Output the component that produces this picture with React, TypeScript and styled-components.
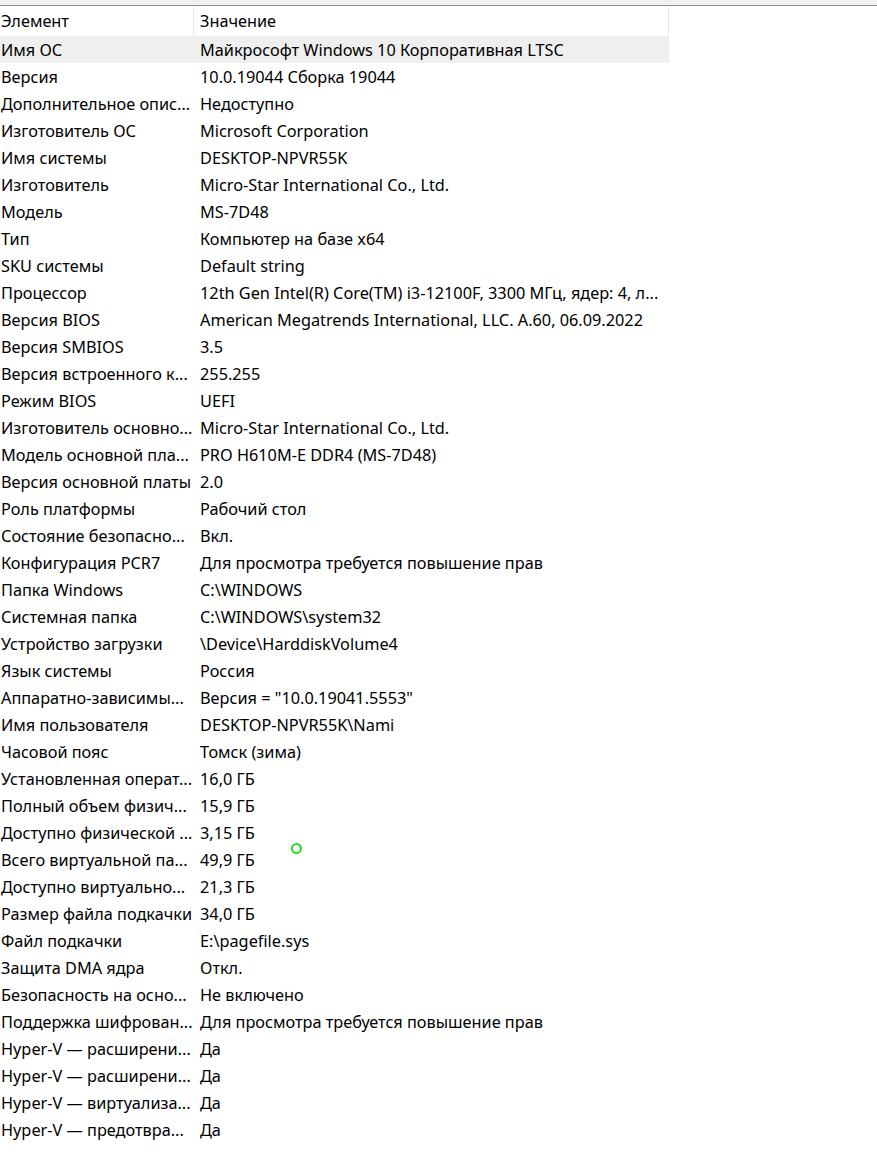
import styled, { createGlobalStyle } from "styled-components";

const GlobalStyle = createGlobalStyle`
  html, body {
    margin: 0;
    padding: 0;
    background: #ffffff;
  }
  body {
    font-family: "Noto Sans", "Open Sans", sans-serif;
    color: #000000;
  }
`;

const rows: [string, string][] = [
  ["Имя ОС", "Майкрософт Windows 10 Корпоративная LTSC"],
  ["Версия", "10.0.19044 Сборка 19044"],
  ["Дополнительное опис...", "Недоступно"],
  ["Изготовитель ОС", "Microsoft Corporation"],
  ["Имя системы", "DESKTOP-NPVR55K"],
  ["Изготовитель", "Micro-Star International Co., Ltd."],
  ["Модель", "MS-7D48"],
  ["Тип", "Компьютер на базе x64"],
  ["SKU системы", "Default string"],
  ["Процессор", "12th Gen Intel(R) Core(TM) i3-12100F, 3300 МГц, ядер: 4, л..."],
  ["Версия BIOS", "American Megatrends International, LLC. A.60, 06.09.2022"],
  ["Версия SMBIOS", "3.5"],
  ["Версия встроенного к...", "255.255"],
  ["Режим BIOS", "UEFI"],
  ["Изготовитель основно...", "Micro-Star International Co., Ltd."],
  ["Модель основной пла...", "PRO H610M-E DDR4 (MS-7D48)"],
  ["Версия основной платы", "2.0"],
  ["Роль платформы", "Рабочий стол"],
  ["Состояние безопасно...", "Вкл."],
  ["Конфигурация PCR7", "Для просмотра требуется повышение прав"],
  ["Папка Windows", "C:\\WINDOWS"],
  ["Системная папка", "C:\\WINDOWS\\system32"],
  ["Устройство загрузки", "\\Device\\HarddiskVolume4"],
  ["Язык системы", "Россия"],
  ["Аппаратно-зависимы...", "Версия = \"10.0.19041.5553\""],
  ["Имя пользователя", "DESKTOP-NPVR55K\\Nami"],
  ["Часовой пояс", "Томск (зима)"],
  ["Установленная операт...", "16,0 ГБ"],
  ["Полный объем физич...", "15,9 ГБ"],
  ["Доступно физической ...", "3,15 ГБ"],
  ["Всего виртуальной па...", "49,9 ГБ"],
  ["Доступно виртуально...", "21,3 ГБ"],
  ["Размер файла подкачки", "34,0 ГБ"],
  ["Файл подкачки", "E:\\pagefile.sys"],
  ["Защита DMA ядра", "Откл."],
  ["Безопасность на осно...", "Не включено"],
  ["Поддержка шифрован...", "Для просмотра требуется повышение прав"],
  ["Hyper-V — расширени...", "Да"],
  ["Hyper-V — расширени...", "Да"],
  ["Hyper-V — виртуализа...", "Да"],
  ["Hyper-V — предотвра...", "Да"],
];

const App = () => {
  return (
    <>
      <GlobalStyle />
      <Window>
        <TopBand />
        <List>
          <HeaderRow>
            <HeaderCell $first>Элемент</HeaderCell>
            <HeaderCell>Значение</HeaderCell>
          </HeaderRow>
          {rows.map(([name, value], i) => (
            <Row key={i} $selected={i === 0}>
              <Cell $first>{name}</Cell>
              <Cell>{value}</Cell>
            </Row>
          ))}
        </List>
        <Cursor />
      </Window>
    </>
  );
};

export default App;

const Window = styled.div`
  position: relative;
  width: 877px;
  height: 1163px;
  background: #ffffff;
  overflow: hidden;
`;

const TopBand = styled.div`
  height: 5px;
  background: #f0f0f0;
  border-bottom: 1px solid #8c8c8c;
`;

const List = styled.div`
  display: flex;
  flex-direction: column;
  width: 669px;
`;

const HeaderRow = styled.div`
  display: grid;
  grid-template-columns: 194px 475px;
  height: 30px;
  align-items: stretch;
`;

const HeaderCell = styled.div<{ $first?: boolean }>`
  display: flex;
  align-items: center;
  padding-left: ${(p) => (p.$first ? "1px" : "6px")};
  font-size: 16.3px;
  white-space: nowrap;
  border-right: 1px solid #e5e5e5;
  margin: 1px 0;
`;

const Row = styled.div<{ $selected?: boolean }>`
  display: grid;
  grid-template-columns: 194px 475px;
  height: 27px;
  align-items: center;
  background: ${(p) => (p.$selected ? "#efefef" : "transparent")};
`;

const Cell = styled.div<{ $first?: boolean }>`
  padding-left: ${(p) => (p.$first ? "1px" : "6px")};
  font-size: 16.3px;
  white-space: nowrap;
  overflow: hidden;
`;

const Cursor = styled.div`
  position: absolute;
  left: 291px;
  top: 843px;
  width: 7px;
  height: 7px;
  border: 2px solid #1fe01f;
  border-radius: 50%;
`;
